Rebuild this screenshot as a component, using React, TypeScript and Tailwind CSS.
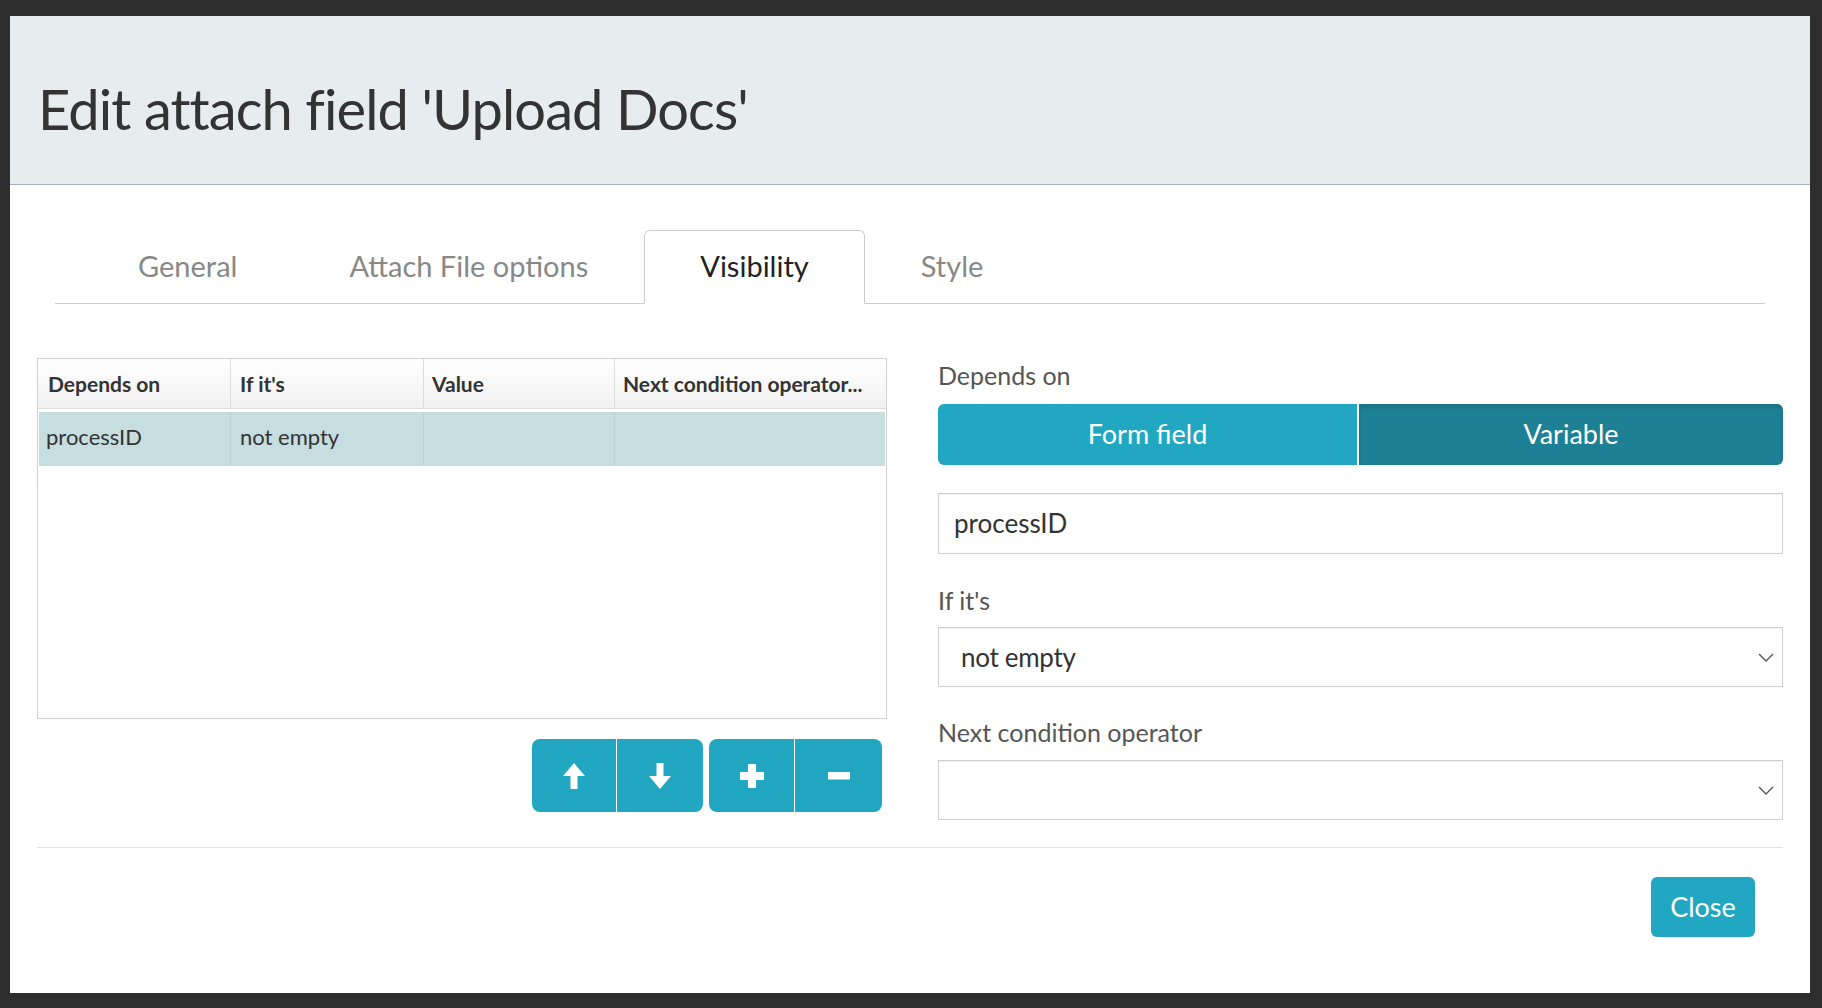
import React from 'react';

const teal = 'bg-[#22a7c3]';

function ArrowUp() {
  return (
    <svg width="24" height="28" viewBox="0 0 24 28">
      <path d="M12 1 L23 14 L15.5 14 L15.5 27 L8.5 27 L8.5 14 L1 14 Z" fill="white" />
    </svg>
  );
}

function ArrowDown() {
  return (
    <svg width="24" height="28" viewBox="0 0 24 28">
      <path d="M12 27 L23 14 L15.5 14 L15.5 1 L8.5 1 L8.5 14 L1 14 Z" fill="white" />
    </svg>
  );
}

function Plus() {
  return (
    <svg width="26" height="26" viewBox="0 0 26 26">
      <rect x="9" y="1" width="8" height="24" rx="1" fill="white" />
      <rect x="1" y="9" width="24" height="8" rx="1" fill="white" />
    </svg>
  );
}

function Minus() {
  return (
    <svg width="22" height="8" viewBox="0 0 22 8">
      <rect x="0" y="0" width="22" height="7.5" rx="1" fill="white" />
    </svg>
  );
}

function Chevron() {
  return (
    <svg width="16" height="9" viewBox="0 0 16 9">
      <path d="M1 1 L8 8 L15 1" fill="none" stroke="#555" strokeWidth="1.4" />
    </svg>
  );
}

function Select({ value }: { value: string }) {
  return (
    <div className="h-[60px] border border-[#cfcfcf] shadow-[inset_0_1px_1px_rgba(0,0,0,0.06)] flex items-center justify-between pl-[22px] pr-[8px] text-[26px] text-[#333]">
      <span className="tracking-[-0.3px]">{value}</span>
      <Chevron />
    </div>
  );
}

export default function App() {
  const tabs = ['General', 'Attach File options', 'Visibility', 'Style'];
  return (
    <div className="w-full h-[1008px] bg-[#2e2e2e] pt-[16px] pl-[10px] font-['Lato',_'Noto_Sans',_sans-serif]">
      <div className="w-[1800px] h-[977px] bg-white flex flex-col">
        <header className="h-[169px] shrink-0 bg-[#e7ecef] border-b border-[#a6b1bf] flex items-center px-[28px] pt-[18px]">
          <h1 className="text-[56px] text-[#333] leading-none tracking-[-0.9px]">Edit attach field 'Upload Docs'</h1>
        </header>

        <div className="flex flex-col px-[27px]">
          <div className="mt-[45px] mx-[18px] border-b border-[#cccccc] flex pl-[27px]">
            {tabs.map((t) =>
              t === 'Visibility' ? (
                <div
                  key={t}
                  className="h-[74px] -mb-px px-[55px] pb-[2px] flex items-center text-[29px] text-[#222] bg-white border border-[#cccccc] border-b-white rounded-t-[6px]"
                >
                  {t}
                </div>
              ) : (
                <div key={t} className="h-[73px] px-[56px] pb-[2px] flex items-center text-[29px] text-[#888]">
                  {t}
                </div>
              )
            )}
          </div>

          <div className="mt-[54px] flex gap-[51px]">
            <div className="w-[850px] flex flex-col">
              <div className="h-[361px] border border-[#d0d0d0] text-[#333]">
                <div className="h-[50px] flex bg-gradient-to-b from-white to-[#f1f1f1] border-b border-[#dcdcdc] font-bold text-[21px]">
                  <div className="w-[193px] border-r border-[#dcdcdc] flex items-center pl-[10px]">Depends on</div>
                  <div className="w-[193px] border-r border-[#dcdcdc] flex items-center pl-[9px]">If it's</div>
                  <div className="w-[191px] border-r border-[#dcdcdc] flex items-center pl-[8px]">Value</div>
                  <div className="flex-1 flex items-center pl-[8px] whitespace-nowrap overflow-hidden">Next condition operator...</div>
                </div>
                <div className="mt-[3px] mx-[1px] h-[54px] flex bg-[#c6dee0] text-[22px]">
                  <div className="w-[192px] border-r border-[#b9d2d5] flex items-center pl-[7px] pb-[5px]">processID</div>
                  <div className="w-[193px] border-r border-[#b9d2d5] flex items-center pl-[9px] pb-[5px]">not empty</div>
                  <div className="w-[191px] border-r border-[#b9d2d5]"></div>
                  <div className="flex-1"></div>
                </div>
              </div>

              <div className="mt-[20px] flex justify-end gap-[6px] pr-[5px]">
                <div className={`flex h-[73px] rounded-[8px] overflow-hidden ${teal}`}>
                  <button className="w-[85px] flex items-center justify-center border-r border-white">
                    <ArrowUp />
                  </button>
                  <button className="w-[86px] flex items-center justify-center">
                    <ArrowDown />
                  </button>
                </div>
                <div className={`flex h-[73px] rounded-[8px] overflow-hidden ${teal}`}>
                  <button className="w-[86px] flex items-center justify-center border-r border-white">
                    <Plus />
                  </button>
                  <button className="w-[87px] flex items-center justify-center">
                    <Minus />
                  </button>
                </div>
              </div>
            </div>

            <div className="w-[845px] flex flex-col pt-[2px] text-[25px] text-[#555]">
              <label className="leading-[30px]">Depends on</label>
              <div className="mt-[14px] h-[61px] flex rounded-[6px] overflow-hidden text-[27px] text-white">
                <button className={`w-[421px] ${teal} border-r-2 border-white`}>Form field</button>
                <button className="flex-1 bg-[#1d8094] shadow-[inset_0_3px_5px_rgba(0,0,0,0.12)]">Variable</button>
              </div>
              <div className="mt-[28px] h-[61px] border border-[#cfcfcf] shadow-[inset_0_1px_1px_rgba(0,0,0,0.06)] flex items-center pl-[15px] text-[26px] text-[#333]">
                processID
              </div>
              <label className="mt-[31px] leading-[30px]">If it's</label>
              <div className="mt-[12px]">
                <Select value="not empty" />
              </div>
              <label className="mt-[30px] leading-[30px]">Next condition operator</label>
              <div className="mt-[13px]">
                <Select value="" />
              </div>
            </div>
          </div>

          <div className="mt-[27px] h-px bg-[#e3e3e3]"></div>

          <div className="mt-[29px] flex justify-end pr-[28px]">
            <button className={`w-[104px] h-[60px] rounded-[6px] ${teal} text-white text-[27px]`}>Close</button>
          </div>
        </div>
      </div>
    </div>
  );
}
